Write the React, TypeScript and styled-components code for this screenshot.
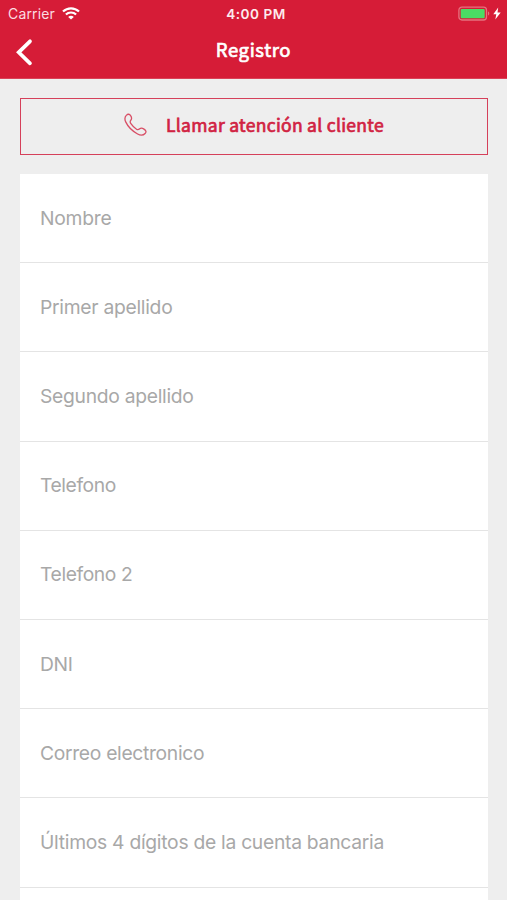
import React from "react";
import styled, { createGlobalStyle } from "styled-components";

const GlobalStyle = createGlobalStyle`
  * { box-sizing: border-box; }
  html, body { margin: 0; padding: 0; background: #eeeeee; }
  body { overflow: hidden; }
  button, input { font: inherit; }
`;

const Screen = styled.main`
  width: 507px;
  height: 900px;
  overflow: hidden;
  background: #eeeeee;
  font-family: Inter, "Liberation Sans", sans-serif;
`;

const Header = styled.header`
  height: 79px;
  background: #d61c37;
  border-bottom: 1px solid #da4258;
  color: #fff;
`;

const StatusBar = styled.div`
  display: grid;
  grid-template-columns: 1fr auto 1fr;
  align-items: center;
  height: 27px;
  padding: 0 6px 0 8px;
`;

const Carrier = styled.div`
  display: flex;
  align-items: center;
  gap: 7px;
  height: 27px;
  font-size: 14px;
  line-height: 26px;
  letter-spacing: 0.15px;
  color: #fbdde1;
`;

const Clock = styled.time`
  padding-left: 3px;
  font-size: 13.6px;
  font-weight: 600;
  line-height: 28px;
  letter-spacing: 0.5px;
  color: #fdebed;
`;

const Power = styled.div`
  display: flex;
  align-items: center;
  justify-content: flex-end;
`;

const NavBar = styled.nav`
  display: grid;
  grid-template-columns: 48px 1fr 48px;
  align-items: center;
  height: 51px;
`;

const BackButton = styled.button`
  display: flex;
  align-items: center;
  width: 48px;
  height: 48px;
  padding: 0 0 2px 15px;
  border: 0;
  background: transparent;
  color: #fff;
`;

const Title = styled.h1`
  margin: 0;
  padding-bottom: 7px;
  text-align: center;
  font-family: "Noto Sans CJK SC", "Noto Sans", sans-serif;
  font-size: 18.5px;
  font-weight: 400;
  line-height: 28px;
  letter-spacing: 0.6px;
  -webkit-text-stroke: 0.7px currentColor;
`;

const Content = styled.section`
  padding: 19px 19px 0 20px;
`;

const CallButton = styled.button`
  display: flex;
  align-items: center;
  justify-content: center;
  gap: 19px;
  width: 100%;
  height: 57px;
  padding: 0 0 4px;
  border: 1px solid #d5405a;
  background: transparent;
  color: #d12342;
  font-family: "Noto Sans CJK SC", "Noto Sans", sans-serif;
`;

const CallLabel = styled.span`
  font-size: 17.5px;
  font-weight: 400;
  line-height: 28px;
  letter-spacing: 0.3px;
  -webkit-text-stroke: 0.7px currentColor;
`;

const Form = styled.form`
  margin-top: 19px;
  background: #fff;
`;

const Field = styled.input<{ $tracking: number }>`
  display: block;
  width: 100%;
  height: 89.2px;
  padding: 0 20px 1px;
  border: 0;
  border-bottom: 1px solid #e4e4e4;
  border-radius: 0;
  outline: 0;
  background: transparent;
  color: #333;
  font-size: 19.3px;
  letter-spacing: ${(p) => p.$tracking}px;

  &::placeholder { color: #a8a8a8; opacity: 1; }
`;

const fields = [
  { label: "Nombre", tracking: -0.25 },
  { label: "Primer apellido", tracking: -0.28 },
  { label: "Segundo apellido", tracking: -0.29 },
  { label: "Telefono", tracking: -0.42 },
  { label: "Telefono 2", tracking: -0.4 },
  { label: "DNI", tracking: -0.3 },
  { label: "Correo electronico", tracking: -0.32 },
  { label: "Últimos 4 dígitos de la cuenta bancaria", tracking: -0.28 },
  { label: "", tracking: 0 },
];

const WifiIcon = () => (
  <svg width="18" height="14" viewBox="0 0 18 14" fill="none" stroke="#fff" strokeWidth="2.2">
    <path d="M1 4.500C5.500.2 12.500.2 17 4.500" />
    <path d="M3.900 7.500C6.700 4.800 11.300 4.800 14.100 7.500" />
    <path d="M6.200 9.900C7.700 8.500 10.300 8.500 11.800 9.900L9 12.600Z" fill="#fff" stroke="none" />
  </svg>
);

const BatteryIcon = () => (
  <svg width="43" height="16" viewBox="0 0 43 16">
    <rect x="0.900" y="1.200" width="27.600" height="12.800" rx="3" fill="none" stroke="#e5727f" strokeWidth="1.300" />
    <rect x="2.700" y="3" width="24" height="9.300" rx="1" fill="#4bdc64" />
    <path d="M30 5.600v4c1.700-.5 1.700-3.500 0-4Z" fill="#e5727f" />
    <path d="M40.200 1.600 35.300 8.200h3l-1 5.400 5.400-7.200h-3.200Z" fill="#fff" />
  </svg>
);

const BackIcon = () => (
  <svg width="19" height="28" viewBox="0 0 19 28" fill="none" stroke="currentColor" strokeWidth="3.700" strokeLinecap="round">
    <path d="M15 3.300 3.700 14.300 15 25.300" strokeLinejoin="miter" />
  </svg>
);

const PhoneIcon = () => (
  <svg width="23" height="24" viewBox="0 0 23 24" fill="none" stroke="#d84f66" strokeWidth="1.300" strokeLinejoin="round">
    <path d="M2.500 2.100C3.800.8 5.500 1 6.600 2.600C8 4.700 8.200 5.700 6.800 7.200C5.800 8.300 5.900 9.200 6.900 10.700C8.500 13 10.300 14.900 12.500 16.300C13.800 17.100 14.600 16.800 15.700 15.800C17 14.600 18.100 14.800 20 16.100C22.300 17.700 22.500 19 21.100 20.500C19.100 22.600 16.500 22.600 13.600 21C8.200 18 4 13.800 1.700 8.900C.5 6.200.6 3.900 2.500 2.100Z" />
  </svg>
);

export default function App() {
  return (
    <>
      <GlobalStyle />
      <Screen>
        <Header>
          <StatusBar>
            <Carrier>Carrier<WifiIcon /></Carrier>
            <Clock>4:00 PM</Clock>
            <Power><BatteryIcon /></Power>
          </StatusBar>
          <NavBar>
            <BackButton type="button" aria-label="Volver"><BackIcon /></BackButton>
            <Title>Registro</Title>
          </NavBar>
        </Header>
        <Content>
          <CallButton type="button">
            <PhoneIcon />
            <CallLabel>Llamar atención al cliente</CallLabel>
          </CallButton>
          <Form>
            {fields.map(({ label, tracking }, index) => (
              <Field key={index} type="text" placeholder={label} $tracking={tracking} />
            ))}
          </Form>
        </Content>
      </Screen>
    </>
  );
}
